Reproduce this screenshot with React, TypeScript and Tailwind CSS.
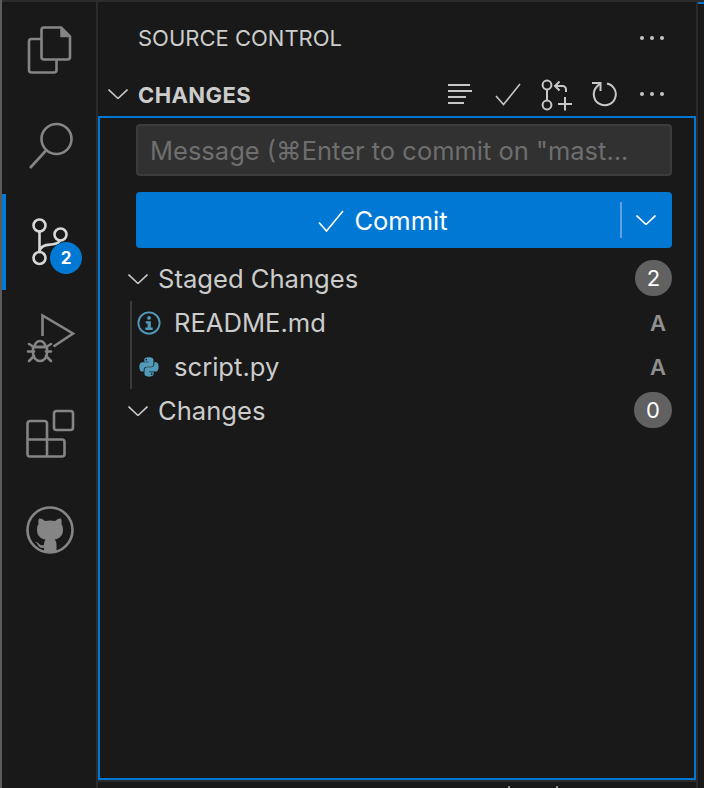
import React from "react";
import { FaPython } from "react-icons/fa";

const Activity = ({ active, children }: { active?: boolean; children: React.ReactNode }) => (
  <div className="relative flex h-[96px] w-full items-center justify-center pl-[2px]">
    {active && <div className="absolute left-0 top-0 h-full w-1 bg-[#0078d4]" />}
    {children}
  </div>
);

const Ico = ({ color = "#858585", width = 2.6, children }: { color?: string; width?: number; children: React.ReactNode }) => (
  <svg width="48" height="48" viewBox="0 0 48 48" fill="none" stroke={color} strokeWidth={width} strokeLinecap="round" strokeLinejoin="round" className="overflow-visible">
    {children}
  </svg>
);

const Chevron = ({ className, color = "#c5c5c5" }: { className?: string; color?: string }) => (
  <svg width="20" height="10" viewBox="0 0 20 10" fill="none" stroke={color} strokeWidth="1.6" className={className}>
    <path d="M0.5 0.5 L10 9.5 L19.5 0.5" />
  </svg>
);

const Dots = () => (
  <svg width="24" height="4" viewBox="0 0 24 4" fill="#c5c5c5">
    <circle cx="2" cy="2" r="2" />
    <circle cx="12" cy="2" r="2" />
    <circle cx="22" cy="2" r="2" />
  </svg>
);

const Badge = ({ n, wide }: { n: string; wide?: boolean }) => (
  <span className={`mb-[2px] flex h-9 items-center justify-center rounded-full bg-[#616161] text-[22px] text-white ${wide ? "w-[38px]" : "w-[37px]"}`}>{n}</span>
);

const GroupRow = ({ label, n, wide }: { label: string; n: string; wide?: boolean }) => (
  <div className="flex h-11 items-center pl-[28px] pr-[22px]">
    <Chevron />
    <span className="ml-[10px] flex-1 text-[25.6px] leading-none text-[#cccccc]">{label}</span>
    <Badge n={n} wide={wide} />
  </div>
);

const FileRow = ({ icon, name }: { icon: React.ReactNode; name: string }) => (
  <div className="flex h-11 items-center pl-[37px] pr-[28px]">
    <span className="flex w-6 items-center justify-center">{icon}</span>
    <span className="ml-[13px] flex-1 text-[25.6px] leading-none text-[#cccccc]">{name}</span>
    <span className="text-[22px] font-semibold leading-none text-[#8f8f8f]">A</span>
  </div>
);

export default function App() {
  return (
    <div className="flex h-[788px] w-[704px] overflow-hidden bg-[#191919] font-['Inter',sans-serif]">
      <div className="w-[2px] bg-[#5c5c5c]" />
      <div className="flex w-[94px] flex-col border-t-2 border-[#2b2b2b]">
        <Activity>
          <Ico>
            <path d="M15 13 H5.5 A2.5 2.5 0 0 0 3 15.5 V44 A2.5 2.5 0 0 0 5.5 46.5 H28 A2.5 2.5 0 0 0 30.5 44 V35" />
            <path d="M18 1.5 H35 L44 10.5 V31 A2.5 2.5 0 0 1 41.5 33.5 H18 A2.5 2.5 0 0 1 15.5 31 V4 A2.5 2.5 0 0 1 18 1.5 Z" />
            <path d="M35 1.5 V10.5 H44" fill="#858585" strokeWidth="1.5" />
          </Ico>
        </Activity>
        <Activity>
          <Ico>
            <circle cx="30.5" cy="17" r="15" />
            <path d="M20.5 28 L4 46" strokeLinecap="butt" />
          </Ico>
        </Activity>
        <Activity active>
          <div className="relative">
            <Ico color="#d7d7d7">
              <circle cx="13.5" cy="7.5" r="6" />
              <circle cx="34.5" cy="16.5" r="6" />
              <circle cx="13.5" cy="40" r="6" />
              <path d="M13.5 13.5 V34" />
              <path d="M13.5 33 C15 27 21 27 25 26.5 C30 26 33 25 34 22.5" />
            </Ico>
            <span className="absolute left-[24px] top-[24px] flex h-8 w-8 items-center justify-center rounded-full bg-[#0078d4] text-[17px] font-bold leading-none text-white">2</span>
          </div>
        </Activity>
        <Activity>
          <Ico>
            <path d="M16.5 22 V1.5 L47 19.5 L27.5 32.5" strokeLinecap="butt" strokeLinejoin="miter" />
            <path d="M3 30 L8 33 M20 33 L25 30 M2 37.5 H8 M20 37.5 H25 M3 47 L8 42 M20 42 L25 47" />
            <path d="M7 33 H21 V39 A7 8 0 0 1 7 39 Z" />
            <path d="M8.5 33 A5.5 6 0 0 1 19.5 33 Z" />
          </Ico>
        </Activity>
        <Activity>
          <Ico>
            <rect x="28" y="1" width="19" height="19" rx="2.5" />
            <path d="M21 29.5 V13.5 A2.5 2.5 0 0 0 18.5 11 H4 A2.5 2.5 0 0 0 1.5 13.5 V44 A2.5 2.5 0 0 0 4 46.5 H36 A2.5 2.5 0 0 0 38.5 44 V32 A2.5 2.5 0 0 0 36 29.5 H1.5 M21 29.5 V46.5" />
          </Ico>
        </Activity>
        <Activity>
          <svg width="48" height="48" viewBox="0 0 48 48" fill="#858585">
            <circle cx="24" cy="24" r="22.5" fill="none" stroke="#858585" strokeWidth="2.6" />
            <path d="M13 12.5 C15 12 17.5 13.5 19 15 C22 14.3 26 14.3 29 15 C30.5 13.5 33 12 35 12.5 C35.8 14.5 35.8 16.5 35.4 18 C36.6 19.6 37 21.5 37 24 C37 29.5 33.5 32.8 28.5 33.6 C30 34.8 30.5 36.5 30.5 38.5 V46.5 C26 47.2 22 47.2 18 46.5 V41.8 C14.5 42.4 13 41 11.8 38.8 C11 37.4 10 36.6 9 36 C10.5 35.6 12 36.4 13.2 38 C14.5 39.4 16 39.6 18 39 C18 37 18.5 35 19.5 33.6 C14.5 32.8 11 29.5 11 24 C11 21.5 11.4 19.6 12.6 18 C12.2 16.5 12.2 14.5 13 12.5 Z" />
          </svg>
        </Activity>
      </div>
      <div className="w-[2px] bg-[#2b2b2b]" />
      <div className="flex w-[598px] flex-col border-t-2 border-[#2b2b2b]">
        <div className="flex h-[70px] items-center pl-[40px] pr-[32px] pt-[2px]">
          <span className="flex-1 text-[22px] leading-none text-[#cccccc]">SOURCE CONTROL</span>
          <Dots />
        </div>
        <div className="flex h-[44px] items-center pl-[10px] pr-[32px]">
          <Chevron />
          <span className="ml-[10px] flex-1 pt-[2px] text-[22px] font-bold leading-none tracking-[0.4px] text-[#cccccc]">CHANGES</span>
          <svg width="190" height="32" viewBox="0 0 190 32" fill="none" stroke="#c8c8c8" strokeWidth="2" className="mr-[12px] overflow-visible">
            <g transform="translate(-438,-78)">
              <path d="M448 85 H470 M448 91 H472 M448 97 H466 M448 103 H464" />
              <path d="M496 96 L503.5 104.5 L520 84" strokeWidth="1.6" />
              <circle cx="547" cy="85" r="4.4" />
              <circle cx="547" cy="105" r="4.4" />
              <path d="M547 89.5 V100.5" />
              <path d="M555.5 86 H562.5 A3.5 3.5 0 0 1 566 89.5 V92" />
              <path d="M559.5 81.5 L555 86 L559.5 90.5" />
              <path d="M558 104 H572 M565 97 V110.5" />
              <path d="M607 83.5 A11 11 0 1 1 597 86.5 L600.5 83" />
              <path d="M592 83 H600.5 V91" />
            </g>
          </svg>
          <Dots />
        </div>
        <div className="flex h-[664px] flex-col border-2 border-[#0078d4] pt-[6px]">
          <div className="ml-[36px] mr-[22px] flex h-[52px] items-center rounded border-2 border-[#3c3c3c] bg-[#313131] pl-[12px] pt-[2px]">
            <span className="whitespace-nowrap text-[25.5px] leading-none text-[#6e6e6e]">{'Message (⌘Enter to commit on "mast...'}</span>
          </div>
          <div className="ml-[36px] mr-[22px] mt-[16px] flex h-[56px] items-center rounded bg-[#0078d4]">
            <div className="flex flex-1 items-center justify-center gap-[10px] pl-[10px] pt-[2px]">
              <svg width="26" height="22" viewBox="0 0 26 22" fill="none" stroke="#ffffff" strokeWidth="1.6">
                <path d="M1 12.5 L8.5 21 L25 1" />
              </svg>
              <span className="text-[25.5px] leading-none text-white">Commit</span>
            </div>
            <div className="h-9 w-[2px] bg-[#5ea4e0]" />
            <Chevron className="ml-[14px] mr-[16px]" color="#ffffff" />
          </div>
          <div className="mt-[9px]">
            <GroupRow label="Staged Changes" n="2" />
            <div className="relative">
              <div className="absolute bottom-0 left-[30px] top-0 w-[2px] bg-[#3a3a3a]" />
              <FileRow
                name="README.md"
                icon={
                  <svg width="26" height="26" viewBox="0 0 26 26" fill="#519aba">
                    <circle cx="13" cy="13" r="11.5" fill="none" stroke="#519aba" strokeWidth="2" />
                    <circle cx="13" cy="7.5" r="2" />
                    <path d="M9.5 11 H15 V18 H17 V20.5 H9 V18 H11.5 V13.5 H9.5 Z" />
                  </svg>
                }
              />
              <FileRow name="script.py" icon={<FaPython size={22} color="#519aba" />} />
            </div>
            <GroupRow label="Changes" n="0" wide />
          </div>
        </div>
        <div className="h-[2px] bg-[#2b2b2b]" />
        <div className="flex pl-[410px] pt-[4px]">
          <span className="h-[2px] w-[2px] bg-[#8a8a8a]" />
          <span className="ml-[46px] h-[2px] w-[2px] bg-[#8a8a8a]" />
        </div>
      </div>
      <div className="w-[2px] bg-[#2b2b2b]" />
      <div className="flex-1 border-t-2 border-[#2b2b2b]">
        <div className="h-[2px] bg-[#0078d4]" />
      </div>
    </div>
  );
}
